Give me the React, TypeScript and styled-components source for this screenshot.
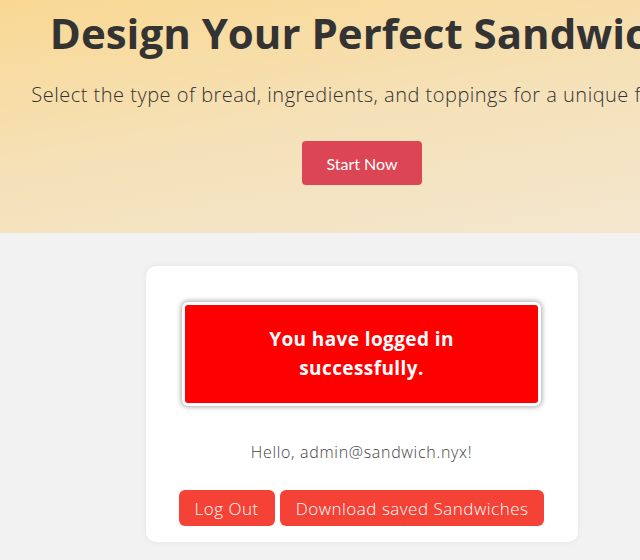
import React from 'react'
import styled, { createGlobalStyle } from 'styled-components'

const GlobalStyle = createGlobalStyle`
  html, body {
    margin: 0;
    padding: 0;
    overflow: hidden;
    background: #f2f2f2;
  }
  body {
    font-family: 'Open Sans', 'Liberation Sans', sans-serif;
  }
`

const Page = styled.div`
  width: 724px;
  min-height: 560px;
  background: #f2f2f2;
`

const Hero = styled.header`
  height: 233px;
  box-sizing: border-box;
  padding-top: 8px;
  display: flex;
  flex-direction: column;
  align-items: center;
  background: linear-gradient(170deg, #f9d893 0%, #f5e1b8 50%, #f3e7d0 100%);
`

const Title = styled.h1`
  margin: 0;
  font-family: 'Open Sans', sans-serif;
  font-size: 42px;
  font-weight: 700;
  line-height: 50px;
  color: #333;
  white-space: nowrap;
`

const Subtitle = styled.p`
  margin: 24px 0 0;
  font-family: 'Open Sans', sans-serif;
  font-size: 20px;
  font-weight: 300;
  letter-spacing: 0.5px;
  line-height: 26px;
  color: #333;
  white-space: nowrap;
`

const StartButton = styled.button`
  margin-top: 33px;
  width: 120px;
  height: 44px;
  border: none;
  border-radius: 4px;
  background: #dc4553;
  color: #fff;
  font-family: Lato, sans-serif;
  font-size: 16px;
  cursor: pointer;
`

const Main = styled.main`
  display: flex;
  justify-content: center;
  padding-top: 33px;
`

const Card = styled.section`
  width: 432px;
  box-sizing: border-box;
  padding: 36px 37px 16px 36px;
  background: #fff;
  border-radius: 10px;
  box-shadow: 0 0 6px rgba(0, 0, 0, 0.06);
  text-align: center;
`

const Alert = styled.div`
  height: 104px;
  box-sizing: border-box;
  display: flex;
  align-items: center;
  justify-content: center;
  padding: 0 60px;
  background: #ff0000;
  border: 3px solid #fff;
  border-radius: 6px;
  box-shadow: 0 0 5px 1px rgba(0, 0, 0, 0.35);
  color: #fff;
  font-family: 'Open Sans', sans-serif;
  font-size: 19px;
  font-weight: 700;
  letter-spacing: 0.4px;
  line-height: 29px;
`

const Greeting = styled.p`
  margin: 35px 0 0;
  font-family: 'Open Sans', sans-serif;
  font-size: 16px;
  font-weight: 300;
  letter-spacing: 0.7px;
  line-height: 22px;
  color: #444;
`

const Actions = styled.div`
  display: flex;
  justify-content: center;
  gap: 5px;
  margin-top: 27px;
`

const ActionButton = styled.button`
  flex-shrink: 0;
  height: 36px;
  padding: 0 16px;
  border: none;
  border-radius: 6px;
  background: #f44336;
  color: #fff;
  font-family: 'Open Sans', sans-serif;
  font-size: 17px;
  font-weight: 300;
  letter-spacing: 0.5px;
  white-space: nowrap;
  cursor: pointer;
`

export default function App() {
  return (
    <>
      <GlobalStyle />
      <Page>
        <Hero>
          <Title>Design Your Perfect Sandwich</Title>
          <Subtitle>
            Select the type of bread, ingredients, and toppings for a unique flavor!
          </Subtitle>
          <StartButton>Start Now</StartButton>
        </Hero>
        <Main>
          <Card>
            <Alert>You have logged in successfully.</Alert>
            <Greeting>Hello, admin@sandwich.nyx!</Greeting>
            <Actions>
              <ActionButton>Log Out</ActionButton>
              <ActionButton>Download saved Sandwiches</ActionButton>
            </Actions>
          </Card>
        </Main>
      </Page>
    </>
  )
}
